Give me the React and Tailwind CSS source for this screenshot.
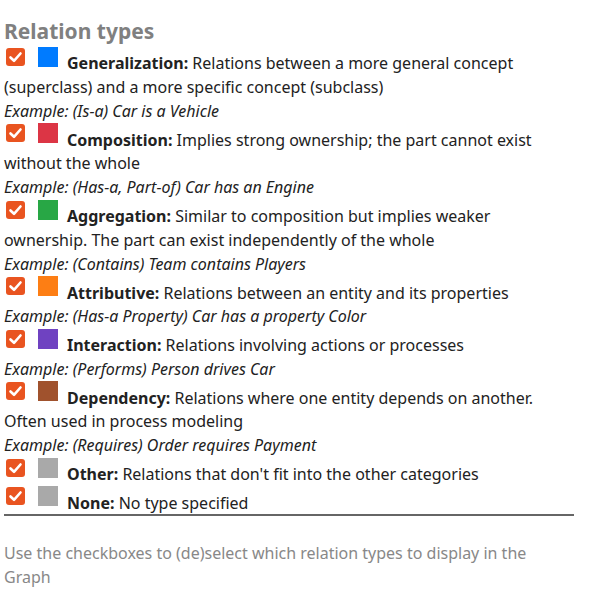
import React from "react";

const TYPES = [
  {
    name: "Generalization",
    color: "bg-[#007bff]",
    text: "Relations between a more general concept (superclass) and a more specific concept (subclass)",
    example: "Example: (Is-a) Car is a Vehicle",
  },
  {
    name: "Composition",
    color: "bg-[#dc3545]",
    text: "Implies strong ownership; the part cannot exist without the whole",
    example: "Example: (Has-a, Part-of) Car has an Engine",
  },
  {
    name: "Aggregation",
    color: "bg-[#28a745]",
    text: "Similar to composition but implies weaker ownership. The part can exist independently of the whole",
    example: "Example: (Contains) Team contains Players",
  },
  {
    name: "Attributive",
    color: "bg-[#fd7e14]",
    text: "Relations between an entity and its properties",
    example: "Example: (Has-a Property) Car has a property Color",
  },
  {
    name: "Interaction",
    color: "bg-[#6f42c1]",
    text: "Relations involving actions or processes",
    example: "Example: (Performs) Person drives Car",
  },
  {
    name: "Dependency",
    color: "bg-[#a0522d]",
    text: "Relations where one entity depends on another. Often used in process modeling",
    example: "Example: (Requires) Order requires Payment",
  },
  {
    name: "Other",
    color: "bg-[#a9a9a9]",
    text: "Relations that don't fit into the other categories",
  },
  {
    name: "None",
    color: "bg-[#a9a9a9]",
    text: "No type specified",
  },
];

function CheckBox() {
  return (
    <span className="ml-[2px] mb-[3px] inline-block h-[18px] w-[19px] rounded-[3px] bg-[#e95420] align-baseline">
      <svg viewBox="0 0 19 18" className="h-[18px] w-[19px]" aria-hidden>
        <polyline points="4.5,9.5 8,12.8 14.5,5.5" fill="none" stroke="#fff" strokeWidth="2.6" strokeLinecap="round" strokeLinejoin="round" />
      </svg>
    </span>
  );
}

export default function App() {
  return (
    <div className="bg-white pl-[4px] text-[16px] leading-6 text-[#222]" style={{ fontFamily: '"Noto Sans", sans-serif' }}>
      <h3 className="mb-[2px] pt-[19px] text-[21px] font-bold leading-[25px] text-[#808080]">Relation types</h3>
      <div className="w-[570px] border-b-2 border-[#666]">
        {TYPES.map((t) => (
          <div key={t.name}>
            <div>
              <CheckBox />
              <span className={`ml-[13px] mr-[9px] mt-[0.5px] mb-[2px] inline-block h-5 w-5 align-baseline ${t.color}`} />
              <b className="font-bold">{t.name}:</b> {t.text}
            </div>
            {t.example && <div className="italic">{t.example}</div>}
          </div>
        ))}
      </div>
      <p className="mt-[25px] w-[570px] text-[#888]">
        Use the checkboxes to (de)select which relation types to display in the Graph
      </p>
    </div>
  );
}
